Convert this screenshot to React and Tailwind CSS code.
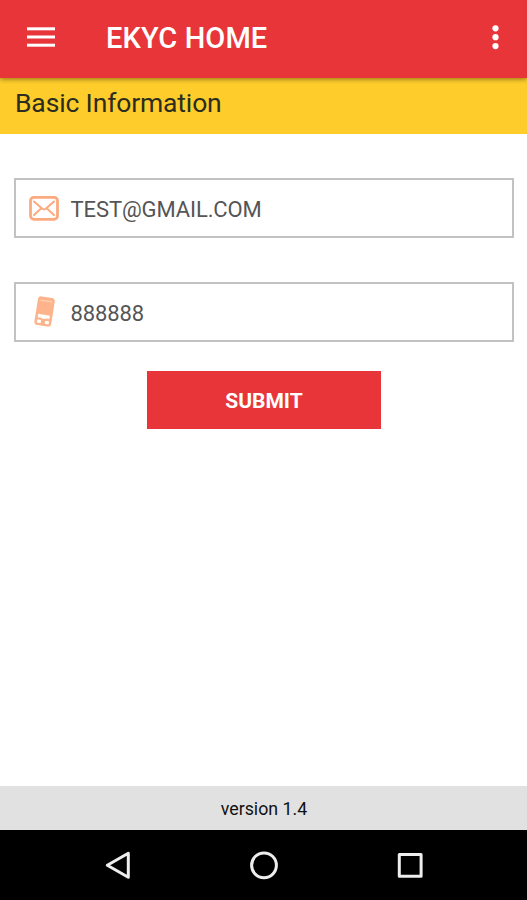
function Header() {
  return (
    <header className="relative z-10 flex h-[78px] items-center bg-[#e83539] shadow-[0_1px_5px_rgba(0,0,0,0.45)]">
      <button aria-label="Menu" className="ml-[27px] mt-[-5px]">
        <svg width="28" height="20" viewBox="0 0 28 20" fill="#fff" className="block">
          <rect y="0.3" width="28" height="3" />
          <rect y="8.5" width="28" height="3" />
          <rect y="16.7" width="28" height="3" />
        </svg>
      </button>
      <h1 className="ml-[51px] mt-[-2px] text-[29px] leading-[34px] font-medium tracking-[0.1px] whitespace-nowrap text-white">
        EKYC HOME
      </h1>
      <button aria-label="More" className="mt-[-4px] mr-[28px] ml-auto">
        <svg width="7" height="26" viewBox="0 0 7 26" fill="#fff" className="block">
          <circle cx="3.5" cy="4.3" r="3.1" />
          <circle cx="3.5" cy="13.2" r="3.1" />
          <circle cx="3.5" cy="22.1" r="3.1" />
        </svg>
      </button>
    </header>
  );
}

function MailIcon() {
  return (
    <svg width="30" height="25" viewBox="0 0 30 25" fill="none" stroke="#fbaa80" strokeLinecap="round" strokeLinejoin="round">
      <rect x="1.5" y="1.3" width="27" height="22" rx="3.5" strokeWidth="2.8" />
      <path d="M5 5.5L13.3 12.8Q15 14 16.7 12.8L25 5.5M5 19L11.8 12.7M25 19L18.2 12.7" strokeWidth="2" />
    </svg>
  );
}

function PhoneIcon() {
  return (
    <svg width="30" height="32" viewBox="0 0 30 32">
      <g transform="rotate(9 15.5 16)">
        <rect x="7" y="1" width="17" height="29" rx="3.5" fill="#fdb48c" />
        <path d="M10.5 6.4v-1.6h10v1.6M14 4.2v1.5M17 4.2v1.5" fill="none" stroke="#fdcfb4" strokeWidth="1" />
        <path d="M9.6 18.8h11.8v3.4h-3.4l-1 .7h-3l-1-.7H9.6z" fill="#fff" />
        <rect x="9.6" y="24.4" width="3.8" height="3.2" fill="#fff" />
        <rect x="17.6" y="24.4" width="3.8" height="3.2" fill="#fff" />
      </g>
    </svg>
  );
}

function Field({ icon, value }) {
  return (
    <div className="flex h-[60px] items-center border-2 border-[#c2c2c2] bg-white">
      <span className="ml-[13px] flex w-[30px] justify-center">{icon}</span>
      <span className="mt-[3px] ml-[11.5px] text-[22px] leading-[28px] tracking-[-0.1px] whitespace-nowrap text-[#555]">
        {value}
      </span>
    </div>
  );
}

function NavBar() {
  return (
    <nav className="flex h-[70px] items-center justify-between bg-black pr-[103px] pl-[104px]">
      <svg width="28" height="30" viewBox="0 0 28 30" fill="none" stroke="#eee" strokeWidth="3" strokeLinejoin="round">
        <path d="M24.3 3.2v24L3.3 15.2z" />
      </svg>
      <svg width="30" height="30" viewBox="0 0 30 30" fill="none" stroke="#eee" strokeWidth="3">
        <circle cx="14" cy="15.3" r="12.4" />
      </svg>
      <svg width="27" height="30" viewBox="0 0 27 30" fill="none" stroke="#eee" strokeWidth="3" strokeLinejoin="round">
        <rect x="2.3" y="4.5" width="21.8" height="21.8" />
      </svg>
    </nav>
  );
}

export default function App() {
  return (
    <div className="flex h-[900px] w-[527px] flex-col overflow-hidden bg-white font-['Roboto',sans-serif]">
      <Header />
      <div className="h-[56px] bg-[#fecc2b] pt-[9px] pl-[15px]">
        <h2 className="text-[26.5px] leading-[32px] tracking-[-0.15px] whitespace-nowrap text-[#2b2d20]">Basic Information</h2>
      </div>

      <main className="flex flex-1 flex-col pt-[44px] pr-[13px] pl-[14px]">
        <Field icon={<MailIcon />} value="TEST@GMAIL.COM" />
        <div className="mt-[44px]">
          <Field icon={<PhoneIcon />} value="888888" />
        </div>
        <button className="mx-auto mt-[29px] h-[58px] w-[234px] bg-[#e83539] pt-[3px] text-[21px] font-bold text-white">
          SUBMIT
        </button>
      </main>

      <footer className="flex h-[44px] items-center justify-center bg-[#e1e1e1] pt-[2px] pl-px text-[17.8px] text-[#111]">
        version 1.4
      </footer>
      <NavBar />
    </div>
  );
}
